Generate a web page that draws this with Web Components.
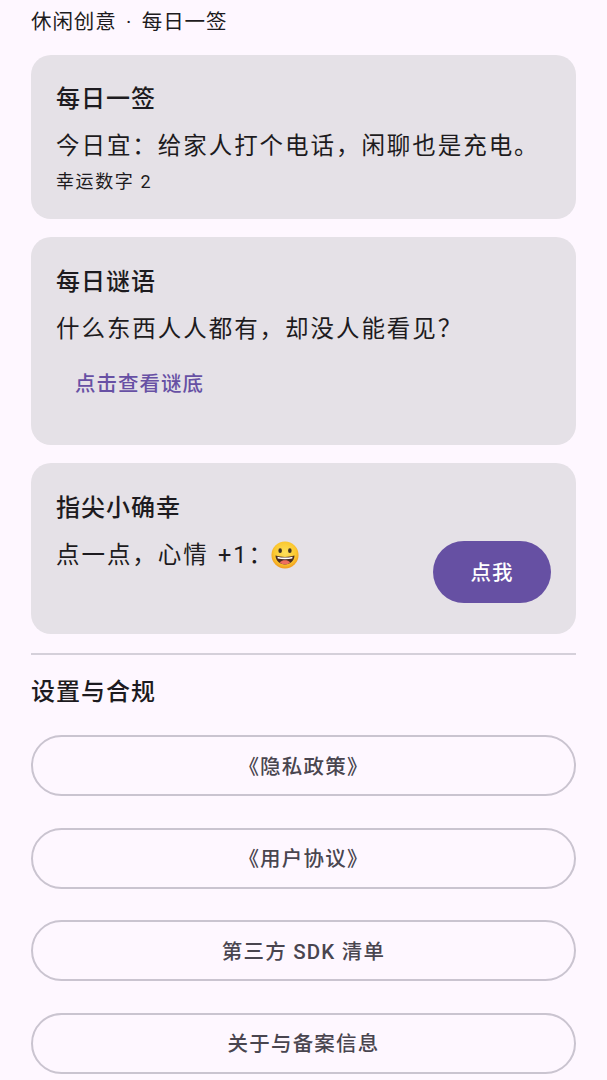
<!DOCTYPE html>
<html lang="zh-CN">
<head>
<meta charset="utf-8">
<title>每日一签</title>
<style>
  html, body { margin: 0; height: 1080px; overflow: hidden; background: #fef7ff; }
  body { font-family: Roboto, "Noto Sans CJK SC", sans-serif; color: #1d1b20; }
</style>
</head>
<body>
<app-page>
  <span slot="heading">休闲创意 · 每日一签</span>

  <info-card style="--pad-top: 27px">
    <span slot="title">每日一签</span>
    <card-line>今日宜：给家人打个电话，闲聊也是充电。</card-line>
    <card-note>幸运数字 2</card-note>
  </info-card>

  <info-card>
    <span slot="title">每日谜语</span>
    <card-line>什么东西人人都有，却没人能看见？</card-line>
    <text-button>点击查看谜底</text-button>
  </info-card>

  <info-card>
    <span slot="title">指尖小确幸</span>
    <mood-row>
      <card-line>点一点，心情 +1：<grin-emoji></grin-emoji></card-line>
      <filled-button slot="action">点我</filled-button>
    </mood-row>
  </info-card>

  <settings-list>
    <span slot="title">设置与合规</span>
    <outline-button>《隐私政策》</outline-button>
    <outline-button>《用户协议》</outline-button>
    <outline-button>第三方 SDK 清单</outline-button>
    <outline-button>关于与备案信息</outline-button>
  </settings-list>
</app-page>

<script>
  function define(name, html) {
    customElements.define(name, class extends HTMLElement {
      constructor() {
        super();
        this.attachShadow({ mode: 'open' });
        this.shadowRoot.innerHTML = html;
      }
    });
  }

  define('app-page', `
    <style>
      :host { display: flex; flex-direction: column; padding: 0 31px; }
      .heading {
        height: 55px; padding-top: 6px; box-sizing: border-box;
        font-size: 20.5px; line-height: 32px; letter-spacing: .9px; word-spacing: 3.5px;
      }
      .stack { display: flex; flex-direction: column; gap: 18px; }
    </style>
    <div class="heading"><slot name="heading"></slot></div>
    <div class="stack"><slot></slot></div>
  `);

  define('info-card', `
    <style>
      :host {
        display: block; padding: var(--pad-top, 28px) 25px 22px; border-radius: 20px;
        background: #e5e1e7;
      }
      .title {
        font-size: 24px; line-height: 34px; font-weight: 500; letter-spacing: 1px;
        margin-bottom: 14px;
      }
    </style>
    <div class="title"><slot name="title"></slot></div>
    <slot></slot>
  `);

  define('card-line', `
    <style>
      :host {
        display: block; font-size: 23.5px; line-height: 33px; letter-spacing: 1.95px; word-spacing: 1.5px;
      }
    </style>
    <slot></slot>
  `);

  define('card-note', `
    <style>
      :host {
        display: block; margin-top: 4px;
        font-size: 18px; line-height: 30px; letter-spacing: 1.6px;
      }
    </style>
    <slot></slot>
  `);

  define('text-button', `
    <style>
      :host {
        display: block; width: fit-content; margin: 23px 0 24px 19px;
        font-size: 20.5px; line-height: 30px; font-weight: 500; letter-spacing: 1px;
        color: #6750a4;
      }
    </style>
    <slot></slot>
  `);

  define('mood-row', `
    <style>
      :host { display: flex; justify-content: space-between; align-items: flex-start; }
      .action { margin: 2px 0 9px; }
    </style>
    <slot></slot>
    <div class="action"><slot name="action"></slot></div>
  `);

  define('filled-button', `
    <style>
      :host {
        display: flex; align-items: center; justify-content: center;
        box-sizing: border-box; padding-bottom: 2px;
        width: 118px; height: 62px; border-radius: 31px;
        background: #6650a3; color: #fff;
        font-size: 20.5px; font-weight: 500; letter-spacing: 1px;
      }
    </style>
    <slot></slot>
  `);

  define('settings-list', `
    <style>
      :host {
        display: block; margin-top: 1px;
        border-top: 2px solid #d5d0da;
      }
      .title {
        margin: 20px 0 26px;
        font-size: 24px; line-height: 34px; font-weight: 500; letter-spacing: 1px;
      }
      .list { display: flex; flex-direction: column; gap: 31.67px; }
    </style>
    <div class="title"><slot name="title"></slot></div>
    <div class="list"><slot></slot></div>
  `);

  define('outline-button', `
    <style>
      :host {
        display: flex; align-items: center; justify-content: center;
        box-sizing: border-box; height: 61px; border-radius: 31px; padding-bottom: 2px;
        border: 2px solid #cac4d0; color: #49454f;
        font-size: 20.5px; font-weight: 500; letter-spacing: 1.2px;
      }
    </style>
    <slot></slot>
  `);

  define('grin-emoji', `
    <style>
      :host { display: inline-block; width: 28px; height: 28px; vertical-align: -6px; margin-left: -3px; }
      svg { display: block; width: 100%; height: 100%; }
    </style>
    <svg viewBox="0 0 30 30" aria-hidden="true">
      <defs>
        <radialGradient id="face" cx="50%" cy="42%" r="58%">
          <stop offset="0" stop-color="#fde15b"/>
          <stop offset=".7" stop-color="#fbc830"/>
          <stop offset="1" stop-color="#f19a1e"/>
        </radialGradient>
      </defs>
      <circle cx="15" cy="15" r="14.5" fill="url(#face)"/>
      <ellipse cx="9.800" cy="10.400" rx="1.900" ry="2.500" fill="#3f3324"/>
      <ellipse cx="20.200" cy="10.400" rx="1.900" ry="2.500" fill="#3f3324"/>
      <path d="M4.800 15.600c3.100 1 6.600 1.500 10.200 1.500s7.100-.5 10.200-1.500c-.3 5.900-4.800 9.600-10.200 9.600s-9.900-3.700-10.200-9.600z" fill="#4a2c20"/>
      <path d="M6.900 16.800c2.600.6 5.200.9 8.100.9s5.500-.3 8.100-.9l-.3 1.900c-2.400.5-5 .8-7.800.8s-5.400-.3-7.800-.8z" fill="#fff"/>
      <path d="M9.400 22.700c1.500-1.500 3.500-2.200 5.600-2.200s4.100.7 5.600 2.200c-1.500 1.500-3.400 2.400-5.600 2.400s-4.100-.9-5.600-2.400z" fill="#ef6f5e"/>
    </svg>
  `);
</script>
</body>
</html>
